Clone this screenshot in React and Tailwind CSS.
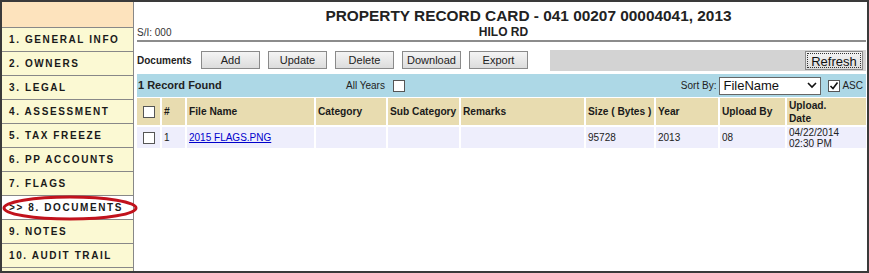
import { useState } from 'react'

const menu = [
  '1. GENERAL INFO',
  '2. OWNERS',
  '3. LEGAL',
  '4. ASSESSMENT',
  '5. TAX FREEZE',
  '6. PP ACCOUNTS',
  '7. FLAGS',
  '>> 8. DOCUMENTS',
  '9. NOTES',
  '10. AUDIT TRAIL',
]

const cols = [
  { label: '#', w: 'w-[25px]' },
  { label: 'File Name', w: 'w-[129px]' },
  { label: 'Category', w: 'w-[72px]' },
  { label: 'Sub Category', w: 'w-[73px]' },
  { label: 'Remarks', w: 'w-[125px]' },
  { label: 'Size ( Bytes )', w: 'w-[70px]' },
  { label: 'Year', w: 'w-[64px]' },
  { label: 'Upload By', w: 'w-[67px]' },
  { label: 'Upload. Date', w: 'flex-1' },
]

const Btn = ({ children, className = '' }) => (
  <button className={`h-[18px] w-[59px] border border-[#8a8a8a] bg-gradient-to-b from-[#f4f4f4] to-[#dcdcdc] text-[11px] text-[#222] leading-none ${className}`}>
    {children}
  </button>
)

const Box = ({ checked }) => (
  <span className="w-[12px] h-[12px] border border-[#555] bg-white flex items-center justify-center">
    {checked && (
      <svg width="10" height="10" viewBox="0 0 10 10">
        <path d="M1.5 5 L4 7.5 L8.5 1.5" stroke="#111" strokeWidth="1.6" fill="none" />
      </svg>
    )}
  </span>
)

export default function App() {
  const [active] = useState(7)
  return (
    <div className="w-[869px] h-[273px] border-2 border-[#3a3a3a] bg-white flex overflow-hidden" style={{ fontFamily: '"Liberation Sans", Arial, sans-serif' }}>
      <div className="relative w-[132px] shrink-0 flex flex-col border-r border-[#888] bg-[#fbf9d3]">
        <div className="h-[26px] bg-[#fde3bd] border-b border-[#888] shrink-0" />
        {menu.map((m, i) => (
          <div
            key={m}
            className={`h-[24px] shrink-0 border-b border-[#888] flex items-center pl-[7px] text-[10px] font-bold tracking-[1.6px] text-[#1a1a1a] ${i === active ? 'bg-white' : ''}`}
          >
            {m}
          </div>
        ))}
        <svg className="absolute left-0 top-[193px]" width="138" height="28" viewBox="0 0 138 28" style={{ overflow: 'visible' }}>
          <ellipse cx="68" cy="13" rx="66" ry="11" stroke="#c1121c" strokeWidth="3" fill="none" />
        </svg>
      </div>

      <div className="flex-1 flex flex-col pl-[3px] pr-[1px]">
        <div className="text-center text-[15.4px] font-bold text-[#222] leading-none pt-[6px] pl-[54px] h-[22px] whitespace-nowrap">
          PROPERTY RECORD CARD - 041 00207 00004041, 2013
        </div>
        <div className="relative h-[18px] flex items-center border-b-2 border-[#8c8c8c]">
          <span className="text-[10px] text-[#333]">S/I: 000</span>
          <span className="absolute inset-x-0 text-center text-[12px] font-bold text-[#222] pl-[4px]">HILO RD</span>
        </div>
        <div className="flex items-center h-[32px] pt-[5px] pb-[1px]">
          <span className="text-[10px] font-bold text-[#222] w-[64px]">Documents</span>
          <div className="flex gap-[8px]">
            <Btn>Add</Btn>
            <Btn>Update</Btn>
            <Btn>Delete</Btn>
            <Btn>Download</Btn>
            <Btn>Export</Btn>
          </div>
          <div className="ml-[22px] flex-1 h-[21px] bg-[#d3d3d3] flex items-center justify-end pr-[3px]">
            <button className="h-[19px] w-[58px] border border-[#8a8a8a] outline outline-1 outline-dotted outline-[#333] -outline-offset-[3px] bg-gradient-to-b from-[#f4f4f4] to-[#dcdcdc] text-[13px] text-[#111]">
              Refresh
            </button>
          </div>
        </div>
        <div className="h-[23px] bg-[#add8e6] flex items-center text-[11px] text-[#222]">
          <span className="font-bold pl-[1px] w-[209px]">1 Record Found</span>
          <span className="text-[10px]">All Years</span>
          <span className="ml-[8px]"><Box /></span>
          <div className="ml-auto flex items-center pr-[3px]">
            <span className="text-[10px] mr-[3px]">Sort By:</span>
            <div className="w-[102px] h-[18px] bg-white border border-[#666] flex items-center justify-between px-[3px] text-[13px] text-[#111]">
              FileName
              <svg width="10" height="7" viewBox="0 0 10 7">
                <path d="M1 1 L5 5 L9 1" stroke="#111" strokeWidth="1.6" fill="none" />
              </svg>
            </div>
            <span className="ml-[7px] mr-[2px]"><Box checked /></span>
            <span className="text-[10px]">ASC</span>
          </div>
        </div>
        <div className="flex h-[27px] bg-[#e8dcb0] text-[10.2px] font-bold text-[#1a1a1a] mt-[1px]">
          <div className="w-[25px] border-r-2 border-white flex items-center justify-center"><Box /></div>
          {cols.map((c) => (
            <div key={c.label} className={`${c.w} border-r-2 border-white last:border-r-0 flex items-center pl-[2px] leading-[13px] whitespace-nowrap overflow-hidden`}>
              {c.label === 'Upload. Date' ? <span>Upload.<br />Date</span> : c.label}
            </div>
          ))}
        </div>
        <div className="flex h-[23px] bg-[#eeeefc] text-[10px] text-[#222] border-t-2 border-white">
          <div className="w-[25px] border-r-2 border-white flex items-center justify-center"><Box /></div>
          <div className="w-[25px] border-r-2 border-white flex items-center pl-[2px]">1</div>
          <div className="w-[129px] border-r-2 border-white flex items-center pl-[2px]">
            <a href="#" className="text-[#0000cc] underline">2015 FLAGS.PNG</a>
          </div>
          <div className="w-[72px] border-r-2 border-white" />
          <div className="w-[73px] border-r-2 border-white" />
          <div className="w-[125px] border-r-2 border-white" />
          <div className="w-[70px] border-r-2 border-white flex items-center pl-[2px]">95728</div>
          <div className="w-[64px] border-r-2 border-white flex items-center pl-[2px]">2013</div>
          <div className="w-[67px] border-r-2 border-white flex items-center pl-[2px]">08</div>
          <div className="flex-1 flex items-center pl-[2px] leading-[11px]">04/22/2014<br />02:30 PM</div>
        </div>
      </div>
    </div>
  )
}
